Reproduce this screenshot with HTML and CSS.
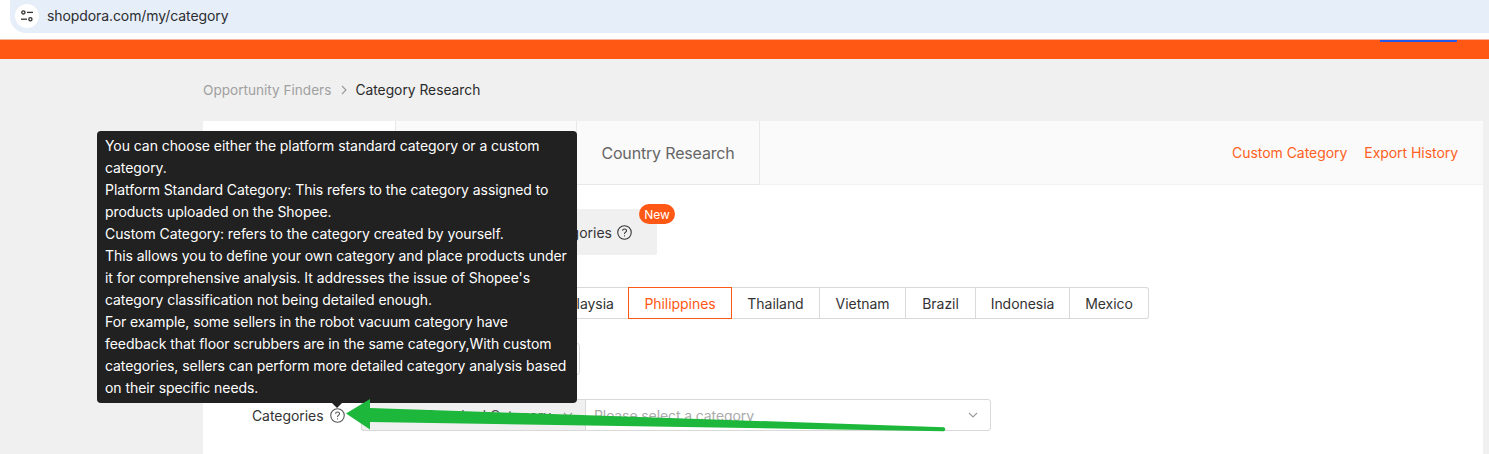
FILE: index.html
```html
<!DOCTYPE html>
<html lang="en">
<head>
<meta charset="utf-8">
<title>Category Research</title>
<link rel="stylesheet" href="styles.css">
</head>
<body>
<div class="browser">
  <div class="address">
    <span class="site-icon">
      <svg width="14" height="14" viewBox="0 0 14 14" fill="none" stroke="#333" stroke-width="1.3">
        <circle cx="3.4" cy="3.4" r="1.6"/><path d="M7 3.4h6"/><path d="M1 10.2h6"/><circle cx="10.4" cy="10.2" r="1.6"/>
      </svg>
    </span>
    <span class="url">shopdora.com/my/category</span>
  </div>
</div>
<header class="topbar"><span class="topbar-mark"></span></header>
<main class="page">
  <nav class="crumbs">
    <span class="crumb-muted">Opportunity Finders</span>
    <svg class="crumb-sep" width="8" height="10" viewBox="0 0 8 10" fill="none" stroke="#999" stroke-width="1.1"><path d="M2 1l4 4-4 4"/></svg>
    <span class="crumb-current">Category Research</span>
  </nav>
  <section class="card">
    <div class="tabbar">
      <div class="tab tab-active"></div>
      <div class="tab tab-second"></div>
      <div class="tab tab-third">Country Research</div>
      <div class="tab-links"><a>Custom Category</a><a>Export History</a></div>
    </div>
    <div class="form">
      <div class="row row-type">
        <div class="label"></div>
        <div class="segment">
          <span class="segment-text">Custom Categories</span>
          <svg class="help" width="15" height="15" viewBox="0 0 14 14" fill="none" stroke="#333"><circle cx="7" cy="7" r="6.3"/><path d="M5.2 5.4c0-2.3 3.7-2.3 3.7-.1 0 1.4-1.9 1.4-1.9 3"/><path d="M7 9.6v1"/></svg>
          <span class="badge">New</span>
        </div>
      </div>
      <div class="row row-sites">
        <div class="label"></div>
        <div class="sites">
          <span class="site site-first"></span>
          <span class="site site-my">Malaysia</span>
          <span class="site site-on">Philippines</span>
          <span class="site site-th">Thailand</span>
          <span class="site site-vn">Vietnam</span>
          <span class="site site-br">Brazil</span>
          <span class="site site-id">Indonesia</span>
          <span class="site site-mx">Mexico</span>
        </div>
      </div>
      <div class="row row-third">
        <div class="label"></div>
        <div class="plain-box"></div>
      </div>
      <div class="row row-cat">
        <div class="label">Categories
          <svg class="help help-grey" width="15" height="15" viewBox="0 0 14 14" fill="none" stroke="#555"><circle cx="7" cy="7" r="6.3"/><path d="M5.2 5.4c0-2.3 3.7-2.3 3.7-.1 0 1.4-1.9 1.4-1.9 3"/><path d="M7 9.6v1"/></svg>
        </div>
        <div class="picker">
          <div class="picker-type">
            <span>Standard Category</span>
            <svg width="10" height="6" viewBox="0 0 10 6" fill="none" stroke="#999" stroke-width="1.1"><path d="M1 1l4 4 4-4"/></svg>
          </div>
          <div class="picker-value">
            <span>Please select a category</span>
            <svg width="10" height="6" viewBox="0 0 10 6" fill="none" stroke="#999" stroke-width="1.1"><path d="M1 1l4 4 4-4"/></svg>
          </div>
        </div>
      </div>
    </div>
  </section>
</main>
<div class="tooltip">
  You can choose either the platform standard category or a custom category.<br>
  Platform Standard Category: This refers to the category assigned to products uploaded on the Shopee.<br>
  Custom Category: refers to the category created by yourself.<br>
  This allows you to define your own category and place products under it for comprehensive analysis. It addresses the issue of Shopee's category classification not being detailed enough.<br>
  For example, some sellers in the robot vacuum category have feedback that floor scrubbers are in the same category,With custom categories, sellers can perform more detailed category analysis based on their specific needs.
</div>
<svg class="annotation" width="1489" height="454" viewBox="0 0 1489 454">
  <path d="M346 413.5L370 399V408L944 427.2Q946.5 429.2 944 431.2L370 422V429.5Z" fill="#1db83b"/>
</svg>
</body>
</html>
```
FILE: styles.css
```css
* { box-sizing: border-box; }
html, body { margin: 0; height: 454px; overflow: hidden; }
body {
  position: relative;
  background: #f0f0f0;
  font-family: Inter, "Liberation Sans", sans-serif;
  font-size: 14px;
  color: #222;
}
.browser { height: 39px; background: #fff; padding-left: 10px; }
.address {
  height: 33px;
  background: #e6eef9;
  border-radius: 0 0 0 16px;
  display: flex;
  align-items: center;
  padding-left: 5px;
  gap: 8px;
}
.site-icon {
  width: 24px; height: 24px; margin-top: -2px;
  background: #fff; border-radius: 50%;
  display: flex; align-items: center; justify-content: center;
  flex: none;
}
.url { font-size: 14px; letter-spacing: -0.09px; color: #2b2d30; margin-top: -2px; }
.topbar {
  height: 20px; background: #ff5714; border-top: 1px solid #f2b79d;
  display: flex; justify-content: flex-end; padding-right: 32px;
}
.topbar-mark { width: 77px; height: 2px; background: #2459f0; }
.page { padding: 0 6px 0 203px; }
.crumbs {
  height: 62px; display: flex; align-items: center; color: #2a2a2a; font-size: 13.6px;
}
.crumb-muted { color: #a0a0a0; }
.crumb-sep { margin: 0 7px 0 9px; }
.crumb-current { font-size: 13.8px; }
.card { background: #fff; border-radius: 3px; height: 340px; }
.tabbar {
  height: 64px; display: flex; background: #fafafa;
}
.tab {
  height: 64px; display: flex; align-items: center; justify-content: center;
  font-size: 16px; color: #666; border-right: 1px solid #e8e8e8; border-bottom: 1px solid #e8e8e8;
}
.tab-active { width: 193px; background: #fff; border-bottom: 0; }
.tab-second { width: 181px; }
.tab-third { width: 183px; letter-spacing: -0.17px; }
.tab-links {
  padding-right: 25px; display: flex; align-items: center; gap: 17px; color: #ff5f22;
  flex: 1; justify-content: flex-end; border-bottom: 1px solid #f3f3f3; letter-spacing: -0.05px;
}
.form { padding: 24px 0 0; }
.row { display: flex; }
.label {
  width: 141.5px; margin-right: 16.5px; flex: none;
  color: #333; display: flex; align-items: center; justify-content: flex-end; gap: 6px; letter-spacing: -0.05px;
}
.row-type { height: 46px; }
.segment {
  width: 296px; height: 46px; background: #f0f0f0; position: relative; border-radius: 2px;
  display: flex; align-items: center; justify-content: flex-end; padding-right: 25px; gap: 5px;
}
.segment-text { color: #333; }
.badge {
  position: absolute; left: 278px; top: -5px;
  width: 36px; height: 20px; border-radius: 10px;
  background: #ff5714; color: #fff; font-size: 12px;
  display: flex; align-items: center; justify-content: center;
}
.row-sites { margin-top: 32px; }
.sites { display: flex; height: 32px; }
.site {
  display: flex; align-items: center; justify-content: center; color: #333; letter-spacing: -0.05px;
  border: 1px solid #d9d9d9; border-left: 0;
}
.site-first { width: 181px; border-left: 1px solid #d9d9d9; border-radius: 3px 0 0 3px; }
.site-my { width: 87px; }
.site-on { width: 104px; color: #ff5714; border: 1px solid #ff5714; margin-left: -1px; }
.site-th { width: 88px; }
.site-vn { width: 86px; }
.site-br { width: 70px; }
.site-id { width: 94px; }
.site-mx { width: 79px; border-radius: 0 3px 3px 0; }
.row-third { margin-top: 24px; }
.plain-box { width: 219px; height: 32px; border: 1px solid #d9d9d9; border-radius: 3px; }
.row-cat { margin-top: 24px; }
.picker { display: flex; height: 32px; }
.picker-type {
  width: 224px; background: #f0f0f0; border: 1px solid #d9d9d9; border-right: 0;
  display: flex; align-items: center; justify-content: flex-end; gap: 12px; padding-right: 12px; color: #555;
  border-radius: 3px 0 0 3px;
}
.picker-value {
  width: 406px; border: 1px solid #d9d9d9; border-radius: 0 3px 3px 0;
  display: flex; align-items: center; justify-content: space-between; padding: 0 12px 0 8px; color: #aaa;
  letter-spacing: -0.1px;
}
.tooltip {
  position: absolute; left: 97px; top: 131px; width: 480px; height: 272px;
  background: #212121; color: #fff; border-radius: 4px;
  padding: 4px 4px 4px 8px; line-height: 22px; font-size: 14px; letter-spacing: -0.065px;
}
.tooltip::after {
  content: ""; position: absolute; left: 235px; top: 100%;
  border: 5px solid transparent; border-top-color: #212121; border-bottom: 0;
}
.annotation { position: absolute; left: 0; top: 0; pointer-events: none; }
```
